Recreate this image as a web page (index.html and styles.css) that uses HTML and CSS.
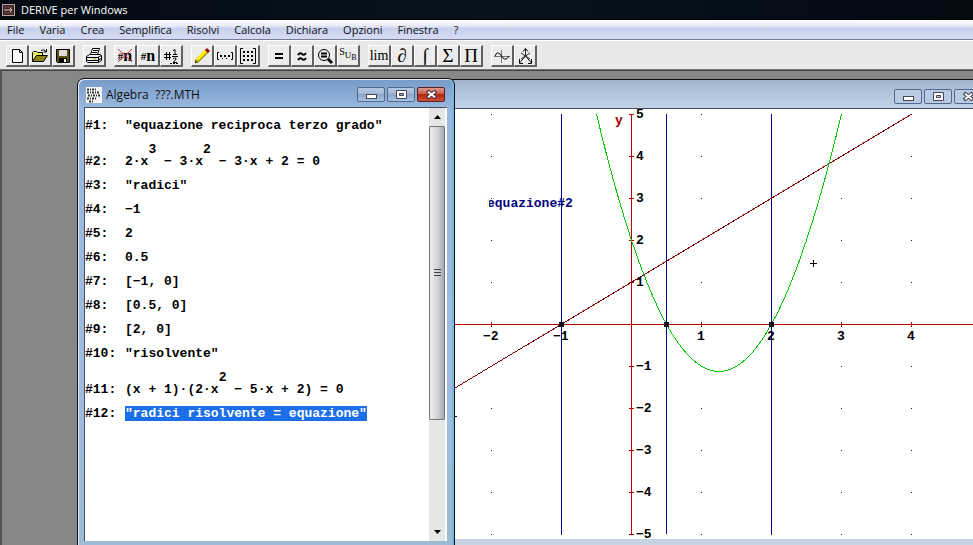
FILE: index.html
```html
<!DOCTYPE html>
<html lang="it">
<head>
<meta charset="utf-8">
<title>DERIVE per Windows</title>
<link rel="stylesheet" href="styles.css">
</head>
<body>
<header class="titlebar">
  <svg class="app-icon" width="13" height="12" viewBox="0 0 13 12" aria-hidden="true"><rect width="13" height="12" fill="#b9a3a3"/><rect x="1" y="1" width="11" height="10" fill="#3a2222"/><path d="M2 6h8M8 4l2 2-2 2" stroke="#f0c8c8" fill="none"/><path d="M2 3h9M2 9h9" stroke="#7a5555"/></svg>
  <h1>DERIVE per Windows</h1>
</header>
<nav class="menubar">
  <button>File</button><button>Varia</button><button>Crea</button><button>Semplifica</button><button>Risolvi</button><button>Calcola</button><button>Dichiara</button><button>Opzioni</button><button>Finestra</button><button>?</button>
</nav>
<div class="toolbar" role="toolbar">
  <div class="group">
    <button aria-label="Nuovo"><svg width="18" height="18"><path d="M4.500 2.500h7l3 3v10h-10zM11.500 2.500v3h3" fill="#fff" stroke="#000"/></svg></button>
    <button aria-label="Apri"><svg width="18" height="18"><path d="M1.500 14.500v-9l1-1h3l1 1h5v3" fill="#eee96a" stroke="#000"/><path d="M1.500 14.500l4-6h11l-4 6z" fill="#8a8416" stroke="#000"/><path d="M10 3.500q3-2 5 1M15.500 2v3h-3" fill="none" stroke="#000"/></svg></button>
    <button aria-label="Salva"><svg width="18" height="18"><path d="M2.500 2.500h13v13h-12l-1-1z" fill="#55540c" stroke="#000"/><path d="M5 3h8v6H5z" fill="#ddd"/><path d="M5 11h8v5H5z" fill="#000"/><path d="M10 12h2v3h-2z" fill="#fff"/></svg></button>
  </div>
  <div class="group">
    <button aria-label="Stampa"><svg width="18" height="18"><path d="M5.500 7.500l2-6h7l-2 6" fill="#fff" stroke="#000"/><path d="M8 3.500h5M7 5.500h5" stroke="#000"/><path d="M1.500 9.500l3-2h11l1 1v5l-3 2h-11l-1-1z" fill="#eee" stroke="#000"/><path d="M2 10.500h11l3-2M2 13.500h11l3-2M13.500 10v5" fill="none" stroke="#000"/><path d="M8 12h3" stroke="#b5a800" stroke-width="1"/></svg></button>
  </div>
  <div class="group">
    <button class="num struck">#<b>n</b><svg class="cross" width="18" height="18" aria-hidden="true"><path d="M2 2l14 13M16 2L2 15" stroke="#c33"/></svg></button>
    <button class="num">#<b>n</b></button>
    <button class="num" aria-label="Rinumera"><svg width="18" height="18"><path d="M2 7.500h7M2 10.500h7M4.500 5v8M7.500 5v8" stroke="#000"/><path d="M11 3.500l2-1v5M11 7.500h4M10 9.500h6M11 11.500q2-1 3 0t-3 4h4" fill="none" stroke="#000"/><path d="M8 16.500h8" stroke="#000" stroke-dasharray="2 1"/></svg></button>
  </div>
  <div class="group">
    <button aria-label="Espressione"><svg width="18" height="18"><path d="M3 15L14 4" stroke="#9a8c00" stroke-width="4"/><path d="M4 13L13 4" stroke="#fff200" stroke-width="3"/><path d="M13 2l3 3" stroke="#911" stroke-width="3"/><path d="M2 14v2h2z"/></svg></button>
    <button aria-label="Vettore"><svg width="18" height="18"><path d="M3 5.500H1.500v7H3M15 5.500h1.500v7H15" fill="none" stroke="#000"/><path d="M4 8h2v2H4zM8 8h2v2H8zM12 8h2v2h-2zM6 11h1v1H6zM10 11h1v1h-1z"/></svg></button>
    <button aria-label="Matrice"><svg width="18" height="18"><path d="M4 1.500H1.500v15H4M14 1.500h2.500v15H14" fill="none" stroke="#000"/><path d="M4 4h2v2H4zM8 4h2v2H8zM12 4h2v2h-2zM4 8h2v2H4zM8 8h2v2H8zM12 8h2v2h-2zM4 12h2v2H4zM8 12h2v2H8zM12 12h2v2h-2z"/></svg></button>
  </div>
  <div class="group">
    <button aria-label="Semplifica"><svg width="18" height="18"><path d="M5 6h8v2H5zM5 10h8v2H5z"/></svg></button>
    <button aria-label="Approssima"><svg width="18" height="18"><path d="M5 8q2-3 4-1t4-1M5 13q2-3 4-1t4-1" fill="none" stroke="#000" stroke-width="2"/></svg></button>
    <button aria-label="Risolvi"><svg width="18" height="18"><circle cx="8" cy="8" r="5.500" fill="#eee" stroke="#000"/><path d="M5 6.500h6M5 9.500h6" stroke="#000" stroke-width="2"/><path d="M12 12l4 4" stroke="#000" stroke-width="3"/></svg></button>
    <button class="sub"><span>S</span><span class="low">U</span><span class="lower">B</span></button>
  </div>
  <div class="group">
    <button class="lim">lim</button>
    <button class="sym heavy">∂</button>
    <button class="sym heavy">∫</button>
    <button class="sym">Σ</button>
    <button class="sym">Π</button>
  </div>
  <div class="group">
    <button aria-label="Grafico 2D"><svg width="18" height="18"><path d="M1 9.500h16M8.500 3v13" stroke="#777"/><path d="M2 9q2-5 5-2l3 4q3 3 6-2" fill="none" stroke="#000"/></svg></button>
    <button aria-label="Grafico 3D"><svg width="18" height="18"><path d="M9.500 2v7l-6 7M9.500 9l6 7M5 6l9 6M14 6l-9 6" stroke="#222" fill="none"/><path d="M7 4.500l2.500-3 2.500 3M3.500 12v4.500H7M15.500 12v4.500H12" stroke="#000" fill="none"/></svg></button>
  </div>
</div>

<main class="desktop">
  <section class="window plot" aria-label="Grafico">
    <div class="caption">
      <div class="controls">
        <button aria-label="Riduci"><svg width="13" height="11"><rect x="1.500" y="5.500" width="10" height="4" fill="#fff" stroke="#445"/></svg></button>
        <button aria-label="Ingrandisci"><svg width="13" height="11"><path d="M1.500 1.500h10v8h-10zM4.500 4.500h4v2h-4z" fill="#fff" stroke="#445" fill-rule="evenodd"/></svg></button>
        <button aria-label="Chiudi"><svg width="13" height="11"><path d="M2 2l9 7M11 2L2 9" stroke="#445" stroke-width="4"/><path d="M3 2.800l7 5.400M10 2.800L3 8.200" stroke="#fff" stroke-width="2"/></svg></button>
      </div>
    </div>
    <div class="client">
      <svg class="chart" width="527" height="431" viewBox="455 109 527 431">
        <defs>
          <pattern id="dots" x="491" y="114" width="70" height="42" patternUnits="userSpaceOnUse"><rect width="1" height="1" fill="#222"/></pattern>
        </defs>
        <rect x="491" y="114" width="430" height="421" fill="url(#dots)"/>
        <path class="axis" d="M455 324.500H982M631.500 114V535"/>
        <path class="axis" d="M629 114.500h5M629 156.500h5M629 198.500h5M629 240.500h5M629 282.500h5M629 366.500h5M629 408.500h5M629 450.500h5M629 492.500h5M629 534.500h5M491.500 322v5M701.500 322v5M841.500 322v5M911.500 322v5"/>
        <path class="root" d="M561.500 114V534M666.500 114V534M771.500 114V534"/>
        <path class="line" d="M455 388L912 114"/>
        <path class="curve" d="M596.500 114Q719 629 841.500 114"/>
        <path d="M559 322h5v5h-5zM664 322h5v5h-5zM769 322h5v5h-5z" fill="#112"/>
        <path class="tick" d="M810 263.500h7M813.500 260v7M455 416.500h2"/>
        <g class="label">
          <text x="636" y="118">5</text><text x="636" y="160">4</text><text x="636" y="202">3</text><text x="636" y="244">2</text><text x="636" y="286">1</text>
          <text x="636" y="370">−1</text><text x="636" y="412">−2</text><text x="636" y="454">−3</text><text x="636" y="496">−4</text><text x="636" y="538">−5</text>
          <text x="483" y="340">−2</text><text x="553" y="340">−1</text><text x="697" y="340">1</text><text x="767" y="340">2</text><text x="837" y="340">3</text><text x="907" y="340">4</text>
          <text class="yname" x="615" y="124">y</text>
          <text class="note" x="487" y="207">equazione#2</text>
        </g>
        <path d="M487 199h2v8h-2z" fill="#fbf7b0"/>
      </svg>
    </div>
  </section>

  <section class="window algebra" aria-label="Algebra">
    <div class="caption">
      <svg width="16" height="16" aria-hidden="true"><rect width="16" height="16" fill="#f4f4f4"/><path d="M1 2.500h10M1 5.500h13M2 8.500h12M1 11.500h9M3 14.500h5" stroke="#333" stroke-width="2" stroke-dasharray="2 1 1 1"/></svg>
      <h2>Algebra&nbsp; ???.MTH</h2>
      <div class="controls">
        <button aria-label="Riduci"><svg width="13" height="11"><rect x="1.500" y="5.500" width="10" height="4" fill="#fff" stroke="#445"/></svg></button>
        <button aria-label="Ingrandisci"><svg width="13" height="11"><path d="M1.500 1.500h10v8h-10zM4.500 4.500h4v2h-4z" fill="#fff" stroke="#445" fill-rule="evenodd"/></svg></button>
        <button class="close" aria-label="Chiudi"><svg width="13" height="11"><path d="M2 2l9 7M11 2L2 9" stroke="#534" stroke-width="4"/><path d="M3 2.800l7 5.400M10 2.800L3 8.200" stroke="#fff" stroke-width="2"/></svg></button>
      </div>
    </div>
    <div class="client">
      <ol class="expressions">
        <li><span>#1:</span><span>"equazione reciproca terzo grado"</span></li>
        <li class="tall"><span>#2:</span><span>2·x<sup>3</sup> − 3·x<sup>2</sup> − 3·x + 2 = 0</span></li>
        <li><span>#3:</span><span>"radici"</span></li>
        <li><span>#4:</span><span>−1</span></li>
        <li><span>#5:</span><span>2</span></li>
        <li><span>#6:</span><span>0.5</span></li>
        <li><span>#7:</span><span>[−1, 0]</span></li>
        <li><span>#8:</span><span>[0.5, 0]</span></li>
        <li><span>#9:</span><span>[2, 0]</span></li>
        <li><span>#10:</span><span>"risolvente"</span></li>
        <li class="tall"><span>#11:</span><span>(x + 1)·(2·x<sup>2</sup> − 5·x + 2) = 0</span></li>
        <li><span>#12:</span><span><mark>"radici risolvente = equazione"</mark></span></li>
      </ol>
      <div class="scrollbar">
        <button aria-label="Su"><svg width="7" height="4"><path d="M0 4l3.500-4L7 4z"/></svg></button>
        <div class="track"><div class="thumb"><i></i><i></i><i></i></div></div>
        <button aria-label="Giù"><svg width="7" height="4"><path d="M0 0h7L3.500 4z"/></svg></button>
      </div>
    </div>
  </section>
</main>
</body>
</html>
```
FILE: styles.css
```css
* { box-sizing: border-box; }

body {
  margin: 0;
  height: 100vh;
  display: flex;
  flex-direction: column;
  overflow: hidden;
  font: 12px/16px "Open Sans", "Noto Sans", sans-serif;
  color: #111;
}

h1, h2 { margin: 0; font-size: 12px; font-weight: 400; }
button { margin: 0; padding: 0; font: inherit; color: inherit; border: 0; background: none; }
svg { display: block; flex: none; }

.titlebar {
  display: flex;
  align-items: center;
  gap: 6px;
  height: 20px;
  padding: 0 2px;
  background: linear-gradient(90deg, #020a12, #08131d 50%, #020a12);
  border-bottom: 1px solid #000;
  color: #fff;
}
.titlebar h1 { font-size: 11px; }

.menubar {
  display: flex;
  gap: 15px;
  height: 20px;
  padding: 0 7px;
  background: linear-gradient(#fff, #e9ecf8 30%, #c7d0ec 45%, #d3daf2 90%);
  border-bottom: 1px solid #777c92;
  font-size: 11px;
}

.toolbar {
  display: flex;
  gap: 8px;
  height: 30px;
  padding: 4px 6px;
  background: #e8e8e8;
  border-top: 1px solid #fff;
  border-bottom: 1px solid #777;
}
.group { display: flex; }
.group button {
  display: flex;
  align-items: center;
  justify-content: center;
  width: 23px;
  height: 22px;
  background: #ececec;
  border: 1px solid #fff;
  border-right: 2px solid #606060;
  border-bottom: 2px solid #606060;
  color: #000;
  overflow: hidden;
}
.group .num { font: bold 11px/18px "Liberation Serif", serif; }
.num b { font-size: 16px; }
.group .struck { position: relative; }
.cross { position: absolute; left: 1px; top: 1px; }
.group .lim { font: 14px/18px "Liberation Serif", serif; }
.group .sym { font: 19px/18px "Liberation Serif", serif; }
.group .heavy { font-weight: 700; }
.group .sub { font: 10px/18px "Liberation Serif", serif; }
.sub span { align-self: flex-start; line-height: 12px; }
.sub .low { padding-top: 3px; font-size: 9px; }
.sub .lower { padding-top: 6px; font-size: 8px; }

.desktop {
  position: relative;
  flex: 1;
  overflow: hidden;
  background: #878787;
  border-top: 1px solid #444;
  border-left: 2px solid #555;
}

.window {
  position: absolute;
  display: flex;
  flex-direction: column;
  border: 1px solid #111;
  border-radius: 7px 7px 0 0;
}
.plot {
  left: 445px;
  right: -17px;
  top: 8px;
  bottom: -2px;
  padding: 0 7px 7px;
  background: linear-gradient(#a3b5cd, #c2d3e9 28px, #c5d3e3);
}
.algebra {
  left: 75px;
  width: 378px;
  top: 7px;
  bottom: -5px;
  padding: 0 7px 8px 6px;
  background: linear-gradient(#779bc9, #98b7de 28px, #9fbbe0 60%, #9cbbd5);
  box-shadow: inset 1px 1px #e4effa, inset -2px 0 #72b9e0;
}
.caption {
  display: flex;
  align-items: center;
  gap: 4px;
  height: 28px;
  flex: none;
}
.plot .caption { padding-top: 4px; }
.algebra .caption { padding: 3px 2px 0; }
.controls { display: flex; gap: 2px; margin-left: auto; }
.controls button {
  display: flex;
  align-items: center;
  justify-content: center;
  width: 28px;
  height: 15px;
  border: 1px solid #52688c;
  border-radius: 2px;
  background: linear-gradient(#b5c9e2, #9fb6d4 50%, #89a5c9 50%, #a9c4e2);
}
.plot .controls button { background: #b9cae2; }
.controls .close {
  border-color: #5b2028;
  background: linear-gradient(#df9a8c, #cb5440 50%, #b42512 50%, #cf5037);
}

.client {
  display: flex;
  flex: 1;
  min-height: 0;
  background: #fff;
  border-top: 1px solid #444f60;
  overflow: hidden;
}
.algebra .client { border-left: 1px solid #444f60; padding-right: 2px; }

.expressions {
  flex: 1;
  margin: 0;
  padding: 6px 0 0;
  list-style: none;
  font: bold 13px/24px "Liberation Mono", monospace;
  color: #000;
  white-space: nowrap;
}
.expressions li { display: grid; grid-template-columns: 40px 1fr; }
.expressions .tall { padding-top: 12px; }
sup { font-size: 13px; line-height: 0; vertical-align: 12px; }
mark { background: #1c6fe8; color: #fff; }

.scrollbar {
  display: flex;
  flex-direction: column;
  width: 16px;
  background: #e6e6e6;
}
.scrollbar button {
  display: flex;
  align-items: center;
  justify-content: center;
  height: 18px;
}
.track { flex: 1; }
.thumb {
  display: flex;
  flex-direction: column;
  align-items: center;
  justify-content: center;
  gap: 2px;
  height: 74%;
  border: 1px solid #777;
  border-radius: 1px;
  background: linear-gradient(90deg, #eee, #d8d8dc 45%, #a9a9b0);
}
.thumb i { width: 7px; height: 1px; background: #444; }

.chart path { shape-rendering: crispEdges; }
.axis { stroke: #c00000; fill: none; }
.root { stroke: #00008c; fill: none; }
.line { stroke: #800000; fill: none; }
.curve { stroke: #00c400; fill: none; }
.tick { stroke: #000; fill: none; }
.label { font: bold 13px "Liberation Mono", monospace; fill: #000; }
.yname { fill: #a00000; }
.note { fill: #000080; }
```
